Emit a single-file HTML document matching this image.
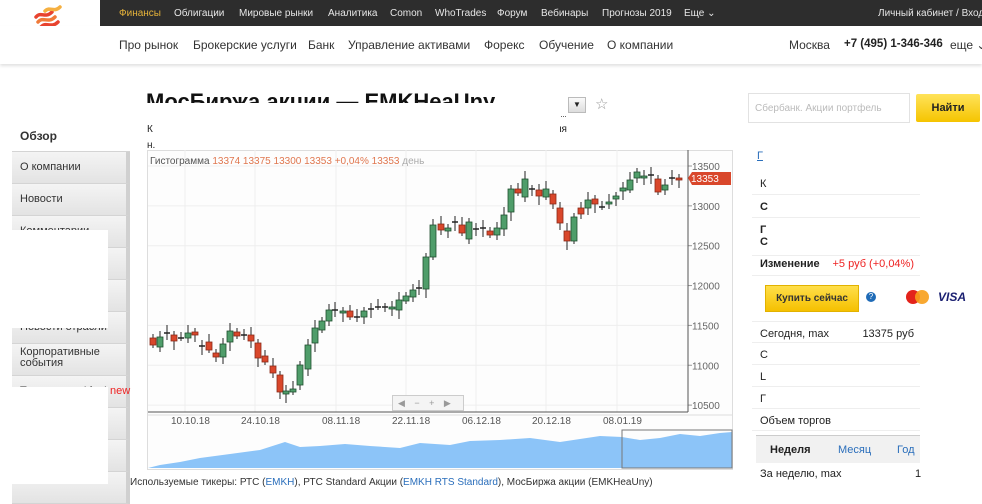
<!DOCTYPE html>
<html><head><meta charset="utf-8"><style>
*{margin:0;padding:0;box-sizing:border-box}
body{width:982px;height:484px;overflow:hidden;background:#fff;font-family:"Liberation Sans",sans-serif;position:relative;color:#222}
.abs{position:absolute;white-space:nowrap}
#topbar{left:100px;top:0;width:882px;height:26px;background:#2d2d2d;font-size:10px;color:#e6e6e6}
#topbar span{position:absolute;top:8px;white-space:nowrap}
#nav2{left:0;top:26px;width:982px;height:38px;background:#fff;box-shadow:0 2px 3px rgba(0,0,0,.12);font-size:12px}
#nav2 span{position:absolute;top:12px;color:#333;white-space:nowrap}
.side{position:absolute;left:12px;width:118px;height:32px;background:linear-gradient(#f4f4f4,#e3e3e3);border-bottom:1px solid #d4d4d4;border-right:4px solid #d0d0d0;font-size:11px;padding:9px 0 0 8px;color:#333;white-space:nowrap}
.row{position:absolute;left:752px;width:168px;border-bottom:1px solid #eee;font-size:11px;padding-left:8px;white-space:nowrap}
</style></head><body>
<div class="abs" style="left:0;top:0;width:100px;height:26px;background:#fff"></div>
<svg class="abs" style="left:32px;top:3px" width="32" height="28" viewBox="0 0 32 28">
<g stroke-width="3.5" fill="none" stroke-linecap="round">
<path d="M4 14 C9 8,13 16,20 9" stroke="#e8432f"/>
<path d="M6 19 C11 13,16 21,23 14" stroke="#f07a38"/>
<path d="M9 24 C14 18,19 26,26 19" stroke="#e8432f"/>
<path d="M13 8 C18 3,22 10,28 4" stroke="#f5b041"/>
</g></svg>
<div class="abs" style="left:20px;top:37px;font-size:16px;font-weight:bold;color:#222;letter-spacing:.5px">финам</div>
<div id="topbar" class="abs">
<span style="left:19px;color:#e6b33a">Финансы</span><span style="left:74px">Облигации</span><span style="left:139px">Мировые рынки</span><span style="left:228px">Аналитика</span><span style="left:290px">Comon</span><span style="left:335px">WhoTrades</span><span style="left:397px">Форум</span><span style="left:441px">Вебинары</span><span style="left:502px">Прогнозы 2019</span><span style="left:584px">Еще ⌄</span><span style="left:778px">Личный кабинет / Вход</span>
</div>
<div id="nav2" class="abs">
<span style="left:119px">Про рынок</span><span style="left:193px">Брокерские услуги</span><span style="left:308px">Банк</span><span style="left:348px">Управление активами</span><span style="left:484px">Форекс</span><span style="left:539px">Обучение</span><span style="left:607px">О компании</span>
<span style="left:789px">Москва</span><span style="left:844px;font-weight:bold;color:#222;font-size:11.5px">+7 (495) 1-346-346</span><span style="left:950px">еще ⌄</span>
</div>
<!-- title clipped -->
<div class="abs" style="left:146px;top:88px;width:360px;height:15px;overflow:hidden;font-size:22px;font-weight:bold;color:#111;line-height:28px">МосБиржа акции — EMKHeaUny</div>
<div class="abs" style="left:568px;top:97px;width:18px;height:16px;background:linear-gradient(#fafafa,#ddd);border:1px solid #bbb;font-size:8px;text-align:center;line-height:14px">▼</div>
<div class="abs" style="left:595px;top:95px;font-size:15px;color:#999">☆</div>
<div class="abs" style="left:147px;top:124px;font-size:10px">К</div>
<div class="abs" style="left:147px;top:140px;font-size:10px">н.</div>
<div class="abs" style="left:535px;top:124px;font-size:10px">ой Для</div>
<div class="abs" style="left:538px;top:116px;width:28px;border-top:1px dotted #666"></div>
<!-- search -->
<div class="abs" style="left:748px;top:93px;width:162px;height:30px;border:1px solid #e2e2e2;font-size:10px;color:#bbb;padding:9px 0 0 6px;overflow:hidden">Сбербанк. Акции портфель</div>
<div class="abs" style="left:916px;top:94px;width:64px;height:28px;background:linear-gradient(#ffe35a,#f5c400);border-radius:2px;font-size:11px;font-weight:bold;text-align:center;line-height:28px">Найти</div>
<!-- sidebar -->
<div class="side" style="top:120px;background:#fff;border-right:none;font-weight:bold;font-size:12px;height:32px">Обзор</div>
<div class="side" style="top:152px">О компании</div>
<div class="side" style="top:184px">Новости</div>
<div class="side" style="top:216px">Комментарии</div>
<div class="side" style="top:248px">Форум&nbsp;&nbsp;&nbsp;&nbsp;&nbsp;&nbsp;&nbsp;&nbsp;й</div>
<div class="side" style="top:280px"> </div>
<div class="side" style="top:312px">Новости отрасли</div>
<div class="side" style="top:344px;padding-top:3px;line-height:11px">Корпоративные<br>события</div>
<div class="side" style="top:376px">Трансляция Live! <span style="color:#e22">new</span></div>
<div class="side" style="top:408px"></div>
<div class="side" style="top:440px"></div>
<div class="side" style="top:472px"></div>
<div class="abs" style="left:0;top:230px;width:108px;height:98px;background:#fff"></div>
<div class="abs" style="left:0;top:387px;width:108px;height:97px;background:#fff"></div>
<!-- chart -->
<div class="abs" style="left:147px;top:150px;width:586px;height:320px;border:1px solid #ddd;background:#fdfdfd"></div>
<svg class="abs" id="ch" style="left:0;top:0" width="982" height="484"></svg>
<div class="abs" style="left:150px;top:156px;font-size:10px;color:#555">Гистограмма <span style="color:#e0774f">13374 13375 13300 13353 +0,04% 13353</span> <span style="color:#aaa">день</span></div>
<div class="abs" style="left:392px;top:395px;width:72px;height:16px;border:1px solid #ccc;background:#f4f4f4;font-size:9px;color:#999;line-height:14px;word-spacing:7px;padding-left:5px">◀ − + ▶</div>
<div class="abs" style="left:130px;top:477px;font-size:10px;color:#333">Используемые тикеры: РТС (<span style="color:#2a6ebb">EMKH</span>), РТС Standard Акции (<span style="color:#2a6ebb">EMKH RTS Standard</span>), МосБиржа акции (EMKHeaUny)</div>
<!-- right panel -->
<div class="abs" style="left:757px;top:150px;font-size:11px;color:#2a6ebb;text-decoration:underline">Г</div>
<div class="row" style="top:170px;height:25px;padding-top:8px">К</div>
<div class="row" style="top:195px;height:23px;padding-top:6px;font-weight:bold">С</div>
<div class="row" style="top:218px;height:38px;padding-top:6px;font-weight:bold;line-height:12px">Г<br>С</div>
<div class="row" style="top:256px;height:20px;font-weight:bold;font-size:11px;padding-top:2px">Изменение <span style="position:absolute;right:6px;color:#e22;font-weight:normal">+5 руб (+0,04%)</span></div>
<div class="abs" style="left:765px;top:285px;width:94px;height:27px;background:linear-gradient(#ffdf4a,#f5c000);border:1px solid #e2b200;font-size:10px;font-weight:bold;text-align:center;line-height:25px;color:#333">Купить сейчас</div>
<div class="abs" style="left:866px;top:292px;width:10px;height:10px;border-radius:50%;background:#1f6bb7;color:#fff;font-size:8px;text-align:center;line-height:10px">?</div>
<div class="abs" style="left:906px;top:290px;width:14px;height:14px;border-radius:50%;background:#e3231b"></div>
<div class="abs" style="left:915px;top:290px;width:14px;height:14px;border-radius:50%;background:#f79e1b;opacity:.9"></div>
<div class="abs" style="left:938px;top:290px;font-size:12px;font-weight:bold;font-style:italic;color:#1a1f71">VISA</div>
<div class="row" style="top:321px;height:22px;padding-top:6px;border-top:1px solid #eee">Сегодня, max<span style="position:absolute;right:6px">13375 руб</span></div>
<div class="row" style="top:343px;height:22px;padding-top:6px">С</div>
<div class="row" style="top:365px;height:22px;padding-top:6px">L</div>
<div class="row" style="top:387px;height:22px;padding-top:6px">Г</div>
<div class="row" style="top:409px;height:22px;padding-top:6px">Объем торгов</div>
<div class="abs" style="left:756px;top:435px;width:164px;height:28px;background:#f1f1f1;border-top:1px solid #ccc;font-size:11px">
<span style="position:absolute;left:14px;top:8px;font-weight:bold">Неделя</span><span style="position:absolute;left:82px;top:8px;color:#2a6ebb">Месяц</span><span style="position:absolute;left:141px;top:8px;color:#2a6ebb">Год</span></div>
<div class="abs" style="left:760px;top:468px;font-size:11px">За неделю, max<span style="position:absolute;left:155px">1</span></div>
<script>
var s=document.getElementById('ch'),h='';
function Y(p){return 166+(13500-p)*0.0797}
[13500,13000,12500,12000,11500,11000,10500].forEach(function(p){var y=Y(p);h+='<line x1="148" x2="688" y1="'+y+'" y2="'+y+'" stroke="#eee"/><line x1="688" x2="692" y1="'+y+'" y2="'+y+'" stroke="#999"/><text x="692" y="'+(y+4)+'" font-size="10" fill="#666" font-family="Liberation Sans">'+p+'</text>'});
[[185,'10.10.18'],[255,'24.10.18'],[336,'08.11.18'],[406,'22.11.18'],[476,'06.12.18'],[546,'20.12.18'],[617,'08.01.19']].forEach(function(d){h+='<line x1="'+d[0]+'" x2="'+d[0]+'" y1="150" y2="412" stroke="#eee"/><text x="'+(d[0]-14)+'" y="424" font-size="10" fill="#555" font-family="Liberation Sans">'+d[1]+'</text>'});
h+='<line x1="148" x2="688" y1="412" y2="412" stroke="#555"/><line x1="688" x2="688" y1="150" y2="412" stroke="#555"/>';
var c=[[153,338,345,'r'],[160,337,347,'g'],[167,333,333,'x'],[174,335,341,'r'],[181,338,338,'x'],[188,333,338,'g'],[195,332,335,'r'],[202,346,346,'x'],[209,342,350,'r'],[216,353,357,'r'],[223,344,357,'g'],[230,331,342,'g'],[237,332,336,'r'],[244,335,335,'x'],[251,335,341,'r'],[258,343,358,'r'],[265,356,362,'r'],[273,366,373,'r'],[280,375,392,'r'],[286,391,394,'g'],[293,389,392,'g'],[300,365,385,'g'],[308,345,369,'g'],[315,328,343,'g'],[322,321,330,'g'],[329,310,321,'g'],[335,310,310,'x'],[343,311,313,'g'],[350,311,317,'r'],[357,317,317,'x'],[364,311,317,'g'],[371,309,309,'x'],[378,307,307,'x'],[385,307,307,'x'],[392,307,309,'g'],[399,300,310,'g'],[406,296,301,'g'],[413,290,297,'g'],[419,288,288,'x'],[426,257,289,'g'],[433,225,257,'g'],[441,224,230,'r'],[448,228,231,'g'],[455,222,222,'x'],[462,225,233,'r'],[469,222,239,'g'],[476,229,229,'x'],[483,228,228,'x'],[490,231,235,'r'],[497,228,235,'g'],[504,215,229,'g'],[511,189,212,'g'],[518,189,193,'r'],[525,179,197,'g'],[532,189,189,'x'],[539,190,196,'r'],[546,189,197,'g'],[553,194,204,'r'],[560,208,223,'r'],[567,231,241,'r'],[574,217,241,'g'],[581,208,214,'r'],[588,200,208,'g'],[595,199,204,'r'],[602,207,207,'x'],[609,202,204,'g'],[616,196,199,'g'],[623,188,191,'g'],[630,180,190,'g'],[637,172,178,'g'],[644,176,178,'g'],[651,175,175,'x'],[658,179,192,'r'],[665,185,190,'g'],[672,178,178,'x'],[679,178,179,'r']];
c.forEach(function(k,i){var x=k[0],t=k[1],b=k[2],w=6;var wt=t-4-(i%3)*2,wb=b+3+(i%4)*2;h+='<line x1="'+x+'" x2="'+x+'" y1="'+wt+'" y2="'+wb+'" stroke="#222" stroke-width="1"/>';
if(k[3]=='x'){h+='<line x1="'+(x-3)+'" x2="'+(x+3)+'" y1="'+t+'" y2="'+t+'" stroke="#222" stroke-width="1.5"/>'}else{var col=k[3]=='g'?'#4f9d6a':'#d9472b';h+='<rect x="'+(x-3)+'" y="'+t+'" width="'+w+'" height="'+Math.max(b-t,2)+'" fill="'+col+'" stroke="'+(k[3]=='g'?'#1f4f2f':'#8a2a18')+'" stroke-width=".8"/>'}});
h+='<path d="M688 178 L692 172 L731 172 L731 185 L692 185 Z" fill="#d9472b"/><text x="691" y="182" font-size="10" fill="#fff" font-family="Liberation Sans">13353</text>';
var pts=[[148,468],[160,465],[180,462],[200,458],[230,454],[260,450],[285,442],[300,447],[320,446],[345,444],[370,446],[400,448],[420,443],[450,445],[470,441],[500,440],[530,438],[560,442],[600,436],[622,437],[640,440],[660,438],[680,434],[700,436],[720,433],[732,432],[732,468]];
h+='<path d="M'+pts.map(function(p){return p[0]+' '+p[1]}).join(' L')+' Z" fill="#8cc4f8"/>';
h+='<line x1="148" x2="732" y1="415" y2="415" stroke="#ddd"/><rect x="622" y="430" width="110" height="38" fill="none" stroke="#777"/>';
s.innerHTML=h;
</script>
<div class="abs" style="left:160px;top:104px;width:400px;height:46px;background:#fff"></div>
</body></html>
